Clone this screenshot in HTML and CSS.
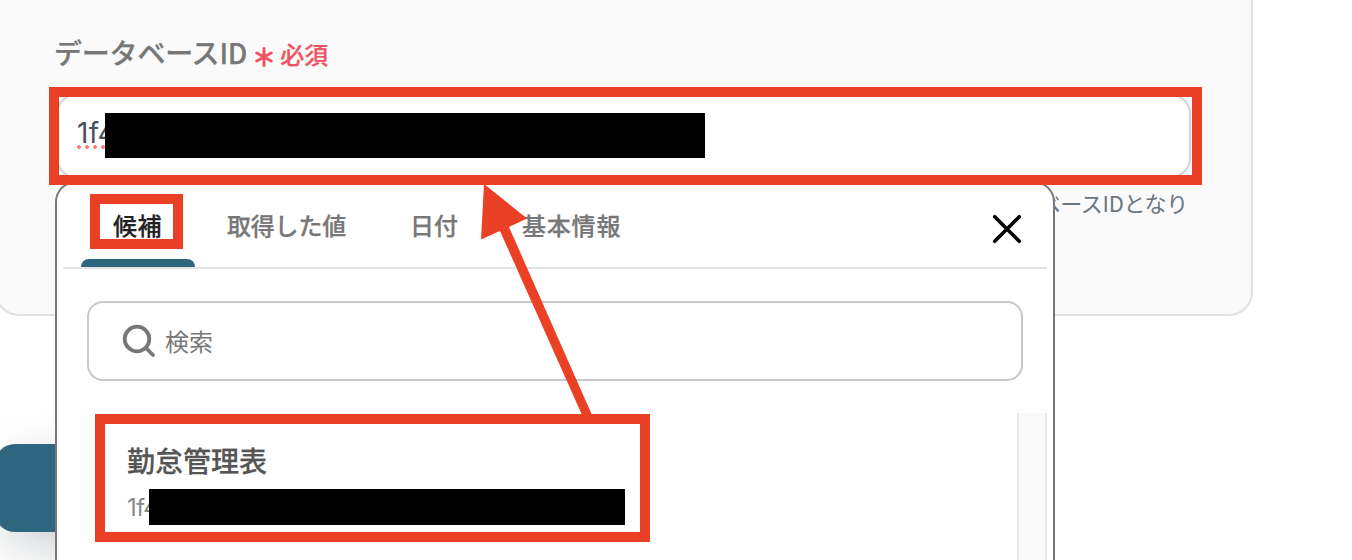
FILE: index.html
```
<!DOCTYPE html>
<html lang="ja">
<head>
    <meta charset="UTF-8">
    <meta name="viewport" content="width=device-width, initial-scale=1.0">
    <title>データベースID</title>
    <link rel="stylesheet" href="styles.css">
</head>
<body>
    <div class="form-card">
        <div class="form-label">
            <label for="databaseId">データベースID</label>
            <span class="required">
                <svg class="asterisk" viewBox="0 0 18 20">
                    <path d="M9 1.5v17M1.8 6l14.4 8M16.2 6l-14.4 8"/>
                </svg>必須
            </span>
        </div>
        <div class="form-input" id="databaseId">
            <span class="typed">1f4</span>
            <div class="mask mask-input"></div>
        </div>
        <p class="help-text">ベースIDとなり</p>
    </div>

    <button class="submit-button" type="button"></button>

    <div class="popup">
        <div class="tabs">
            <div class="tab active">候補</div>
            <div class="tab tab-values">取得した値</div>
            <div class="tab">日付</div>
            <div class="tab tab-info">基本情報</div>
            <svg class="close" viewBox="0 0 30 30">
                <path d="M2.7 2.7l24.6 24.6M27.3 2.7L2.7 27.3"/>
            </svg>
        </div>
        <div class="search">
            <svg class="search-icon" viewBox="0 0 34 34">
                <circle cx="15" cy="15" r="12.3"/>
                <path d="M24 24l7 7"/>
            </svg>
            <span>検索</span>
        </div>
        <div class="results">
            <div class="result">
                <div class="result-title">勤怠管理表</div>
                <div class="result-id">1f4</div>
                <div class="mask mask-result"></div>
            </div>
            <div class="scrollbar"></div>
        </div>
    </div>

    <!-- annotations -->
    <div class="mark mark-input"></div>
    <div class="mark mark-tab"></div>
    <div class="mark mark-result"></div>
    <svg class="arrow" viewBox="0 0 1352 560">
        <path d="M484 184L527 218.5L509 227L592 415H582L500 231L481 239.5Z"/>
    </svg>
</body>
</html>
```
FILE: styles.css
```
* {
    box-sizing: border-box;
}
body {
    font-family: "Noto Sans CJK JP", sans-serif;
    background-color: #fff;
    height: 560px;
    margin: 0;
    overflow: hidden;
    position: relative;
}
.form-card {
    background: #fafafa;
    width: 1258px;
    height: 316px;
    margin-left: -5px;
    padding: 30px 60px 0 61px;
    border: 2px solid #dee2e6;
    border-top: none;
    border-radius: 0 0 24px 24px;
}
.form-label {
    display: flex;
    height: 64px;
    margin-left: -4px;
    font-size: 28px;
    font-weight: 500;
    line-height: 44px;
    letter-spacing: -0.2px;
    color: #777;
    -webkit-text-stroke: 0.25px currentColor;
}
.required {
    display: flex;
    align-items: center;
    gap: 7px;
    height: 48px;
    margin-left: 8px;
    font-size: 24px;
    letter-spacing: 0;
    color: #eb5460;
}
.asterisk {
    width: 18px;
    height: 20px;
    margin-top: 6px;
    fill: none;
    stroke: #eb5460;
    stroke-width: 3;
    stroke-linecap: round;
}
.form-input {
    display: flex;
    position: relative;
    width: 1135px;
    height: 84px;
    margin-left: -2px;
    padding: 18px 19px;
    background: #fff;
    border: 2px solid #ced4da;
    border-radius: 20px;
}
/* dotted spellcheck line under the value */
.typed {
    height: 36px;
    font-family: Inter, sans-serif;
    font-size: 28px;
    line-height: 38px;
    letter-spacing: 0.3px;
    color: #495057;
    background: radial-gradient(circle at 2px 2px, #f77 1.5px, transparent 2.2px) 0 31px / 8px 4px repeat-x;
}
.mask {
    position: absolute;
    background: #000;
}
.mask-input {
    left: 47px;
    top: 17px;
    width: 600px;
    height: 45px;
}
.help-text {
    margin: 6px 3px 0 0;
    font-size: 22px;
    line-height: 36px;
    letter-spacing: -0.3px;
    text-align: right;
    color: #6c757d;
}
.submit-button {
    display: block;
    width: 600px;
    height: 88px;
    margin: 128px 0 0 -5px;
    background: #2e6680;
    border: none;
    border-radius: 20px;
    box-shadow: 10px 16px 48px rgba(0, 20, 30, 0.2);
}
.popup {
    position: absolute;
    left: 55px;
    top: 181px;
    width: 1000px;
    height: 400px;
    padding: 0 6px;
    background: #fff;
    border: 2px solid #777;
    border-radius: 21px;
}
.tabs {
    display: flex;
    height: 86px;
    padding-left: 18px;
    border-bottom: 2px solid #e3e3e3;
}
.tab {
    padding: 24px 32px 0;
    font-size: 24px;
    font-weight: 500;
    line-height: 36px;
    color: #777;
    -webkit-text-stroke: 0.25px currentColor;
}
.tab-values {
    letter-spacing: -0.2px;
}
.tab-info {
    letter-spacing: 0.8px;
}
.tab.active {
    display: flex;
    flex-direction: column;
    justify-content: space-between;
    width: 114px;
    letter-spacing: 0.5px;
    color: #222;
}
.tab.active::after {
    content: "";
    height: 8px;
    margin: 0 -32px;
    background: #2e6680;
    border-radius: 8px 8px 0 0;
}
.close {
    width: 30px;
    height: 30px;
    margin: 31px 25px 0 auto;
    fill: none;
    stroke: #000;
    stroke-width: 3.6;
    stroke-linecap: round;
}
.search {
    display: flex;
    align-items: center;
    gap: 9px;
    height: 80px;
    margin: 32px 24px;
    padding: 0 0 2px 33px;
    border: 2px solid #c8c8c8;
    border-radius: 16px;
    font-size: 24px;
    color: #777;
}
.search-icon {
    width: 34px;
    height: 34px;
    margin-top: 2px;
    fill: none;
    stroke: #777;
    stroke-width: 3.8;
    stroke-linecap: round;
}
.results {
    display: flex;
    justify-content: space-between;
    height: 160px;
}
.result {
    position: relative;
    padding: 26px 64px;
}
.result-title {
    font-size: 28px;
    font-weight: 500;
    line-height: 42px;
    color: #555;
    -webkit-text-stroke: 0.25px currentColor;
}
.result-id {
    font-family: Inter, sans-serif;
    font-size: 24px;
    line-height: 53px;
    letter-spacing: -0.4px;
    color: #888;
}
.mask-result {
    left: 86px;
    top: 76px;
    width: 476px;
    height: 36px;
}
.scrollbar {
    width: 30px;
    background: #fafafa;
    border: 2px solid #e8e8e8;
    border-width: 0 2px;
}
.mark {
    position: absolute;
    border: 10px solid #ea4126;
}
.mark-input {
    left: 49px;
    top: 87px;
    width: 1153px;
    height: 98px;
}
.mark-tab {
    left: 90px;
    top: 194px;
    width: 93px;
    height: 55px;
}
.mark-result {
    left: 95px;
    top: 414px;
    width: 555px;
    height: 128px;
}
.arrow {
    position: absolute;
    left: 0;
    top: 0;
    width: 1352px;
    height: 560px;
    fill: #ea4126;
}
```
